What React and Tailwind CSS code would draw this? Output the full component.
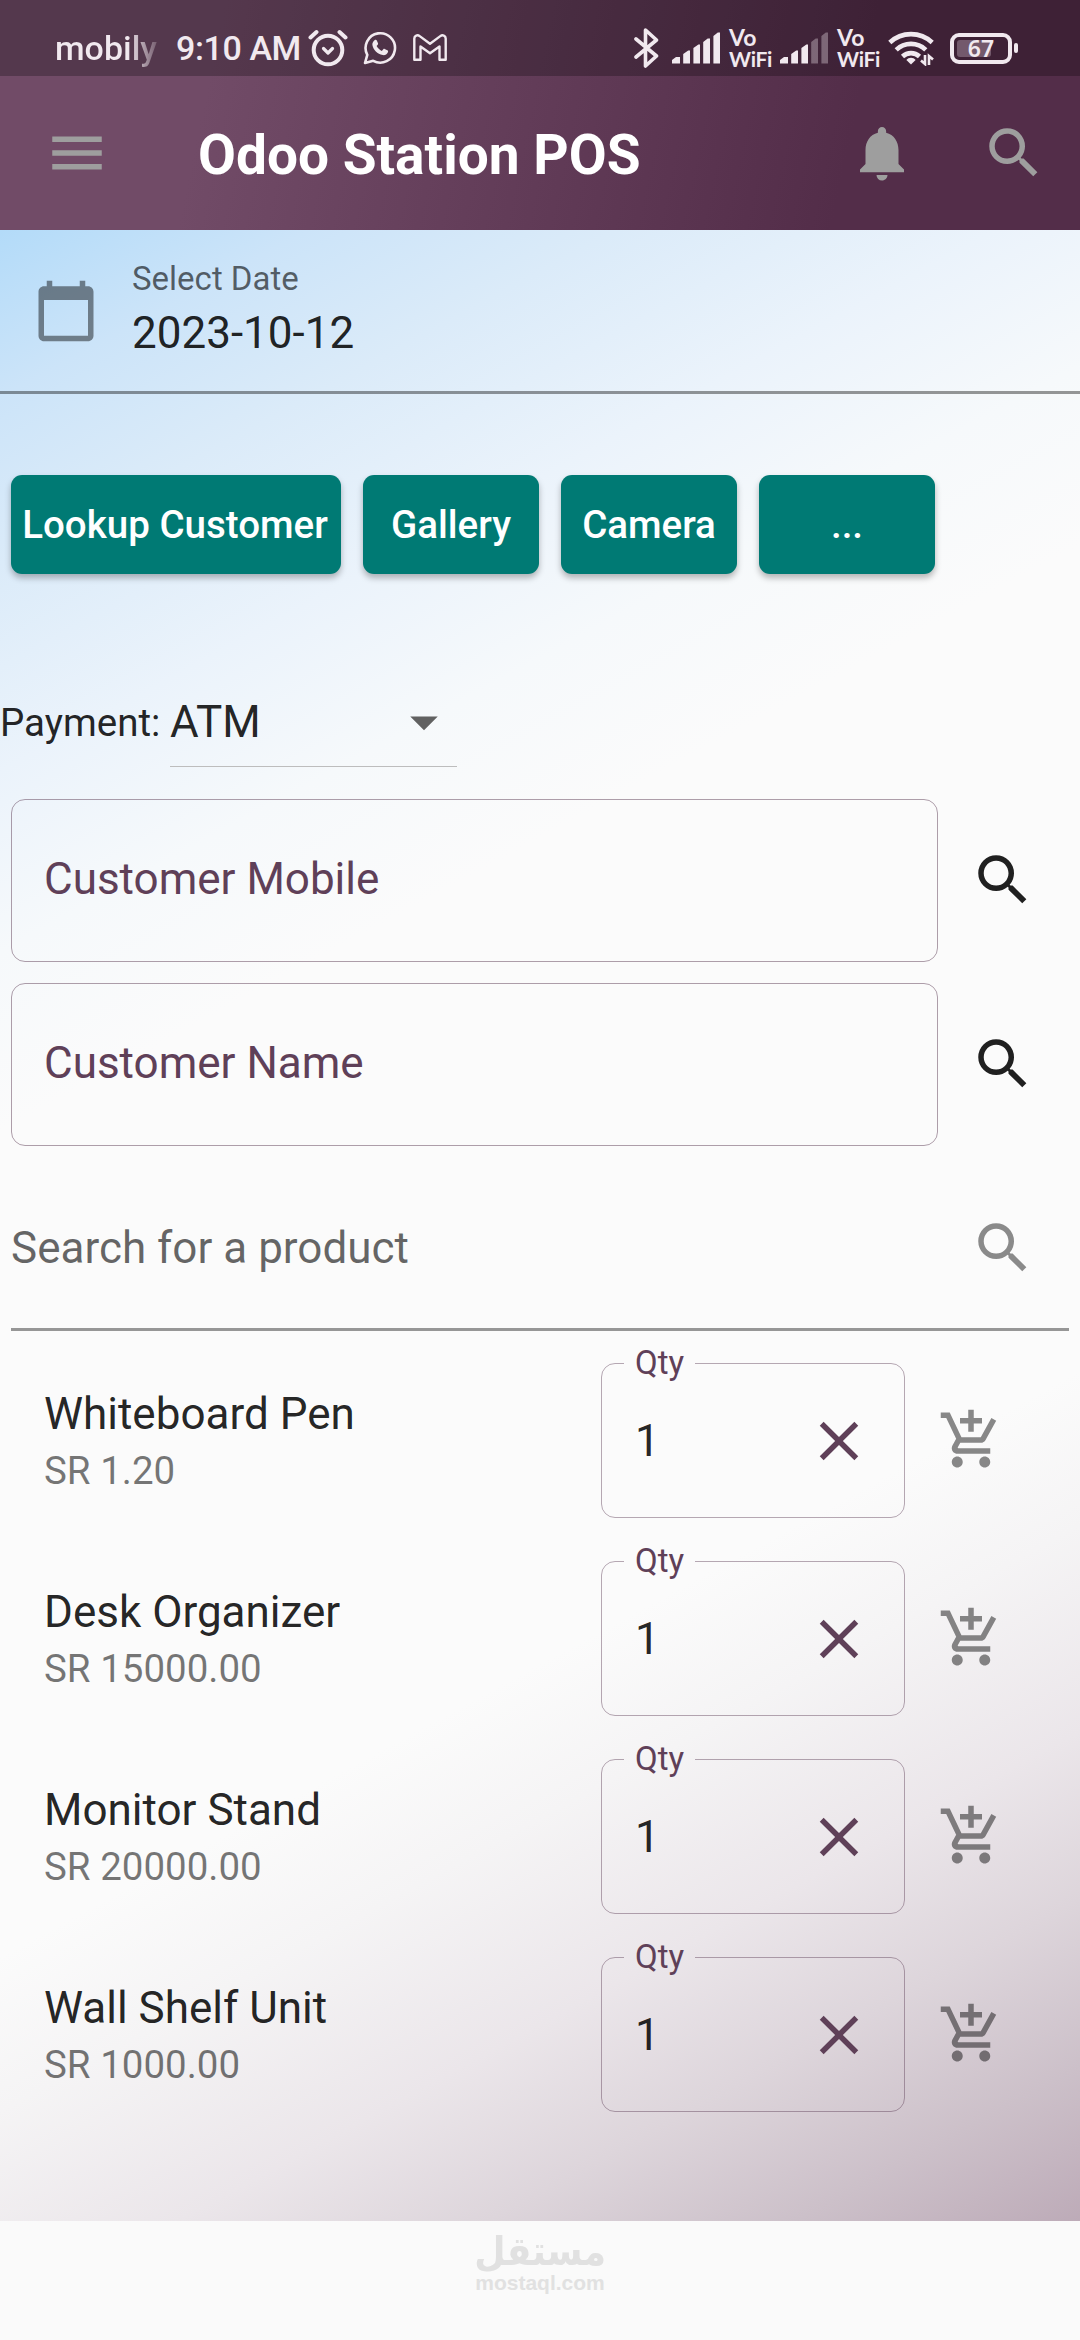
import React, { useState } from 'react';
import {
  MdAddShoppingCart,
  MdArrowDropDown,
  MdCalendarToday,
  MdClose,
  MdMenu,
  MdNotifications,
  MdSearch,
} from 'react-icons/md';

const products = [
  { id: 1, name: 'Whiteboard Pen', price: '1.20' },
  { id: 2, name: 'Desk Organizer', price: '15000.00' },
  { id: 3, name: 'Monitor Stand', price: '20000.00' },
  { id: 4, name: 'Wall Shelf Unit', price: '1000.00' },
];

function AlarmIcon() {
  return (
    <svg className="w-[40px] h-[38px]" viewBox="0 0 40 38" fill="none" stroke="currentColor" strokeLinecap="round" strokeLinejoin="round">
      <circle cx="20" cy="21" r="14.3" strokeWidth="4" />
      <path d="M15.5 19.5l4.5 4.5 4.5-4.5" strokeWidth="3.2" />
      <path d="M2.5 8.5l6-5.5M37.5 8.5l-6-5.5" strokeWidth="4" />
    </svg>
  );
}

function WhatsappIcon() {
  return (
    <svg className="w-[34px] h-[34px]" viewBox="0 0 34 34">
      <path d="M2 32l2.300-8.200A14.700 14.700 0 1 1 10.200 29.800z" fill="none" stroke="currentColor" strokeWidth="2.600" strokeLinejoin="round" />
      <path d="M11.500 9.300c.7-.7 1.900-.6 2.300.3l1.200 2.700c.2.500.1 1-.3 1.400l-1.100 1.300c1.100 2.100 2.900 3.800 5.200 4.900l1.500-1.700c.4-.4.900-.5 1.400-.3l2.600 1.300c.8.400 1 1.200.6 2-1 2.200-3 3.300-5.200 2.900-5.300-1-9.500-5-10.300-10-.3-1.900.7-3.600 2.100-4.800z" fill="currentColor" />
    </svg>
  );
}

function GmailIcon() {
  return (
    <svg className="w-[34px] h-[28px]" viewBox="0 0 34 28" fill="none" stroke="currentColor" strokeWidth="2.400" strokeLinejoin="round">
      <path d="M1.300 4.500v21.200h6.200V12.500L17 19.300l9.500-6.800v13.200h6.200V4.500c0-3-3.200-4-5.400-2.400L17 9.800 6.700 2.100C4.500.5 1.300 1.500 1.300 4.500z" />
    </svg>
  );
}

function BluetoothIcon() {
  return (
    <svg className="w-[25px] h-[40px]" viewBox="0 0 25 40" fill="none" stroke="currentColor" strokeWidth="3.600" strokeLinecap="round" strokeLinejoin="round">
      <path d="M2 11l20.500 17L11.500 38V2l11 10L2 29" />
    </svg>
  );
}

function SignalIcon({ weak }) {
  return (
    <svg className="w-[48px] h-[32px]" viewBox="0 0 48 32" fill="currentColor">
      <path d="M0 31.500v-3.500l4-3h4v6.500zM11.200 31.500V22l5-3.500h1.800v13zM21.400 31.500V16l5-3.500H28v19z" />
      <path d="M31.200 31.500V10l4.500-3.500H38v25zM41.400 31.500V4l4.400-3.500H48v31z" opacity={weak ? 0.35 : 1} />
    </svg>
  );
}

function VoWifi() {
  return (
    <div className="w-[42px] font-['Lato'] font-bold">
      <div className="text-[23px] leading-[21px]">Vo</div>
      <div className="text-[21px] leading-[21px] tracking-[-0.3px]">WiFi</div>
    </div>
  );
}

function WifiIcon() {
  return (
    <svg className="w-[47px] h-[36px]" viewBox="0 0 47 36">
      <g fill="none" stroke="currentColor" strokeWidth="4.600">
        <path d="M1.800 12.500a31 31 0 0 1 42.400 0" />
        <path d="M8.200 19.800a21.500 21.500 0 0 1 29.600 0" />
        <path d="M14.500 26.500a12.500 12.500 0 0 1 17 0" />
      </g>
      <path d="M23 34.500l-4.600-4.600c2.400-3 6.800-3 9.200 0z" fill="currentColor" />
      <path d="M37 25v9l-4-3.500M41 35v-9l4 3.500" fill="none" stroke="currentColor" strokeWidth="2.600" />
    </svg>
  );
}

function Battery() {
  return (
    <div className="flex items-center gap-[2px]">
      <div className="w-[62px] h-[31px] border-4 border-current rounded-[9px] p-[3px] relative">
        <div className="w-[34px] h-[17px] rounded-[3px] bg-[#73596c]"></div>
        <div className="absolute inset-0 flex items-center justify-center font-['Noto_Sans'] font-semibold text-[23px] leading-none">67</div>
      </div>
      <div className="w-[4px] h-[10px] rounded-full bg-current"></div>
    </div>
  );
}

function StatusBar() {
  return (
    <div className="h-[76px] pt-5 pl-[55px] pr-[62px] flex items-center bg-black/25 text-[#f1e9ef]">
      <div className="w-[121px] text-[34px] font-medium bg-linear-to-r from-[#f1e9ef] from-60% to-[#f1e9ef]/20 to-85% bg-clip-text text-transparent">mobily</div>
      <div className="w-[132px] text-[34px] font-medium tracking-[-0.4px] whitespace-nowrap">9:10 AM</div>
      <div className="flex items-center">
        <AlarmIcon />
        <div className="ml-[15px] mr-[16px]"><WhatsappIcon /></div>
        <GmailIcon />
      </div>
      <div className="ml-auto flex items-center">
        <BluetoothIcon />
        <div className="ml-[13px] mr-[9px]"><SignalIcon /></div>
        <VoWifi />
        <div className="ml-[9px] mr-[9px]"><SignalIcon weak /></div>
        <VoWifi />
        <div className="ml-[9px] mr-[15px]"><WifiIcon /></div>
        <Battery />
      </div>
    </div>
  );
}

function AppBar() {
  return (
    <div className="h-[154px] pl-[44px] pr-[33px] flex items-center text-[#9e9e9e]">
      <MdMenu className="w-[66px] h-[66px]" />
      <h1 className="ml-[88px] pt-1 text-[55px] font-bold text-white">Odoo Station POS</h1>
      <MdNotifications className="w-[66px] h-[66px] ml-auto" />
      <MdSearch className="w-[66px] h-[66px] ml-[66px]" />
    </div>
  );
}

function ActionButton({ children, wide }) {
  return (
    <button
      className={`${wide ? 'w-[330px] pr-[2px]' : 'w-[176px]'} h-[99px] rounded-[11px] bg-[#007a74] text-white text-[38.5px] font-medium whitespace-nowrap shadow-[0_4px_6px_rgba(0,0,0,0.28)]`}
    >
      {children}
    </button>
  );
}

function CustomerField({ label }) {
  return (
    <div className="flex items-center">
      <div className="w-[927px] h-[163px] pl-[32px] pb-[3px] flex items-center rounded-[14px] border border-[#5f4058]/50 text-[44px] text-[#5f4058]">
        {label}
      </div>
      <MdSearch className="w-[66px] h-[66px] ml-[32px] mb-[1px] text-[#202020]" />
    </div>
  );
}

function ProductRow({ product }) {
  const [qty, setQty] = useState('1');

  return (
    <div className="h-[198px] pl-[44px] flex">
      <div className="w-[557px] pt-[45px]">
        <div className="text-[44px] leading-[56px] text-black/87">{product.name}</div>
        <div className="text-[38.5px] leading-[57px] text-black/54">SR {product.price}</div>
      </div>
      <fieldset className="w-[304px] h-[174px] mt-[3px] rounded-[14px] border border-[#5f4058]/45">
        <legend className="ml-[22px] px-[11px] text-[33px] leading-[38px] text-[#5f4058]">Qty</legend>
        <div className="h-[117px] pl-[33px] pr-[32px] flex items-center justify-between">
          <span className="text-[44px] text-black/87">{qty}</span>
          <MdClose className="w-[66px] h-[66px] text-[#5f4058]" onClick={() => setQty('')} />
        </div>
      </fieldset>
      <MdAddShoppingCart className="w-[66px] h-[66px] ml-[33px] mt-[66px] text-black/46" />
    </div>
  );
}

export default function App() {
  return (
    <div className="w-[1080px] h-[2340px] flex flex-col bg-[#fafafa] font-['Roboto',sans-serif]">
      {/* Header */}
      <div className="bg-[linear-gradient(102deg,#714b67_20%,#532d49_78%)]">
        <StatusBar />
        <AppBar />
      </div>

      {/* Body */}
      <div className="h-[1991px] bg-[linear-gradient(151.5deg,#b3dbf9_0%,#cce4f9_6.5%,#dbebf9_13%,#ebf3fb_21%,#f6f9fb_28%,#fbfbfb_35%,#fbfbfb_67%,#f5f4f5_73%,#ebe6ea_81%,#ddd5db_87.5%,#ccc0c9_94%,#bdabb8_100%)]">
        {/* Date */}
        <div className="h-[164px] pl-[33px] flex border-b-3 border-black/40">
          <MdCalendarToday className="w-[66px] h-[66px] mt-[48px] text-black/45" />
          <div className="ml-[33px] pt-[29px]">
            <div className="text-[33px] leading-[40px] text-black/60">Select Date</div>
            <div className="text-[44px] leading-[68px] text-black/87">2023-10-12</div>
          </div>
        </div>

        <div className="mt-[81px] pl-[11px] flex gap-[22px]">
          <ActionButton wide>Lookup Customer</ActionButton>
          <ActionButton>Gallery</ActionButton>
          <ActionButton>Camera</ActionButton>
          <ActionButton>...</ActionButton>
        </div>

        {/* Payment */}
        <div className="mt-[105px] h-[88px] flex items-center text-black/87">
          <div className="w-[170px] text-[38.5px] whitespace-nowrap">Payment:</div>
          <div className="w-[287px] h-full flex items-center justify-between border-b border-[#bdbdbd]">
            <span className="pb-[2px] text-[44px]">ATM</span>
            <MdArrowDropDown className="w-[66px] h-[66px] mb-[2px] text-[#616161]" />
          </div>
        </div>

        {/* Customer */}
        <div className="mt-[32px] pl-[11px] flex flex-col gap-[21px]">
          <CustomerField label="Customer Mobile" />
          <CustomerField label="Customer Name" />
        </div>

        {/* Product search */}
        <div className="mt-[22px] mx-[11px] h-[163px] pr-[33px] flex items-center justify-between border-b-3 border-black/40">
          <span className="text-[44px] text-black/60">Search for a product</span>
          <MdSearch className="w-[66px] h-[66px] text-black/45" />
        </div>

        <div className="mt-[10px]">
          {products.map((product) => (
            <ProductRow key={product.id} product={product} />
          ))}
        </div>
      </div>

      {/* Footer mark */}
      <div className="flex flex-col items-center text-[#e1e1e1] font-bold">
        <div className="mt-[9px] h-[43px] scale-x-90 font-['DejaVu_Sans',sans-serif] text-[40px] leading-[43px]" dir="rtl">مستقل</div>
        <div className="font-['Liberation_Sans',sans-serif] text-[21px] leading-[20px]">mostaql.com</div>
      </div>
    </div>
  );
}
